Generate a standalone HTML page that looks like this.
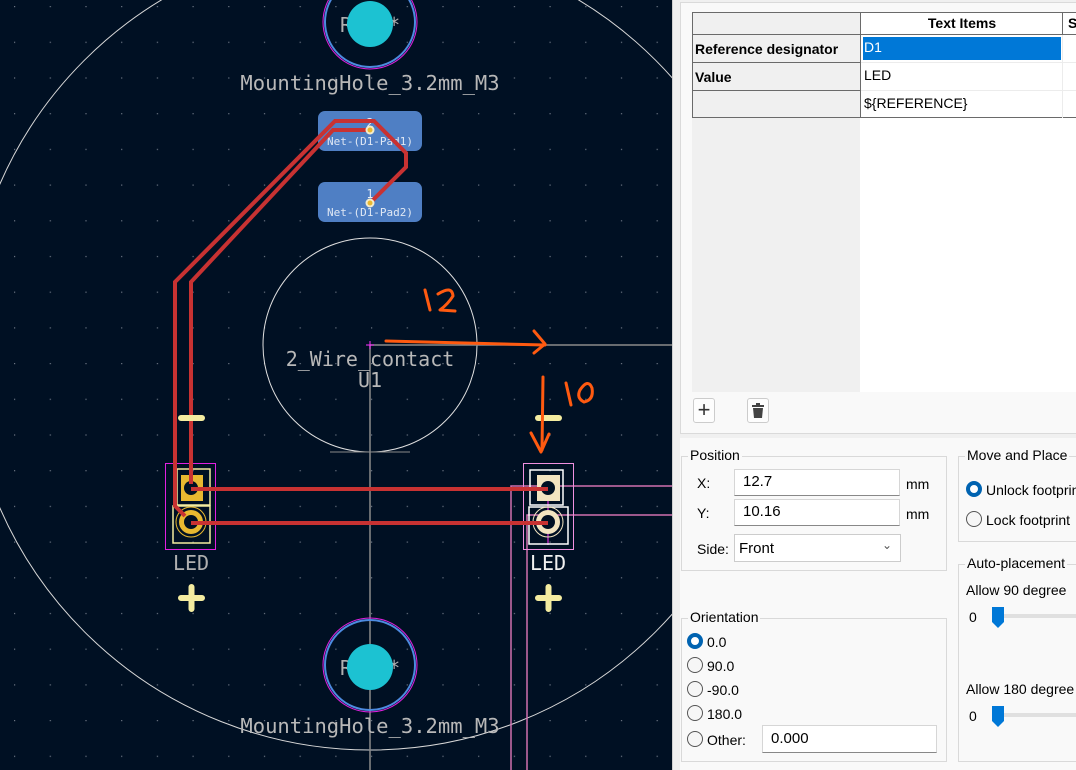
<!DOCTYPE html>
<html><head><meta charset="utf-8"><style>
*{margin:0;padding:0;box-sizing:border-box}
body{width:1076px;height:770px;overflow:hidden;position:relative;font-family:"Liberation Sans",sans-serif;font-size:14px;color:#000;background:#f0f0f0}
.a{position:absolute}
.gb{position:absolute;border:1px solid #d9d9d9}
.gl{position:absolute;background:#f9f9f9;padding:0 2px;top:-10px;left:6px;font-size:14px;white-space:nowrap}
.inp{position:absolute;background:#fff;border:1px solid #d6d6d6;border-bottom:1px solid #888;padding:3px 8px;font-size:15px}
.rad{position:absolute;width:16px;height:16px;border:1px solid #555;border-radius:50%;background:#f6f6f6}
.rad.on{border:4px solid #0063b1;background:#fff}
</style></head><body>
<svg class="a" style="left:0;top:0" width="672" height="770" viewBox="0 0 672 770">
<defs><pattern id="g" x="14" y="6" width="35.7" height="35.7" patternUnits="userSpaceOnUse"><rect x="0" y="0" width="1.2" height="1.2" fill="#6d7684"/></pattern></defs>
<rect width="672" height="770" fill="#001023"/>
<rect width="672" height="770" fill="url(#g)"/>
<circle cx="370" cy="346" r="404" fill="none" stroke="#d8d8d8" stroke-width="1"/>
<circle cx="370" cy="345" r="107" fill="none" stroke="#e0e0e0" stroke-width="1"/>
<line x1="370" y1="345" x2="370" y2="770" stroke="#8a8a8a" stroke-width="1.5"/>
<line x1="370" y1="345" x2="672" y2="345" stroke="#8a8a8a" stroke-width="1.5"/>
<line x1="330" y1="452" x2="410" y2="452" stroke="#8a8a8a" stroke-width="1"/>
<path d="M366 345h8M370 341v8" stroke="#ff30ff" stroke-width="1"/>
<g><circle cx="370" cy="22" r="47" fill="none" stroke="#e020e0" stroke-width="1"/><circle cx="370" cy="22" r="45" fill="none" stroke="#4d8be0" stroke-width="2"/>
<text x="340" y="32" fill="#b0b0b0" font-family="DejaVu Sans Mono" font-size="20">REF**</text><circle cx="370" cy="24" r="23" fill="#1cc2d2"/></g>
<g><circle cx="370" cy="665" r="47" fill="none" stroke="#e020e0" stroke-width="1"/><circle cx="370" cy="665" r="45" fill="none" stroke="#4d8be0" stroke-width="2"/>
<text x="340" y="675" fill="#b0b0b0" font-family="DejaVu Sans Mono" font-size="20">REF**</text><circle cx="370" cy="667" r="23" fill="#1cc2d2"/></g>
<text x="370" y="90" fill="#b8b8b8" font-family="DejaVu Sans Mono" font-size="20.5" text-anchor="middle">MountingHole_3.2mm_M3</text>
<text x="370" y="733" fill="#b8b8b8" font-family="DejaVu Sans Mono" font-size="20.5" text-anchor="middle">MountingHole_3.2mm_M3</text>
<rect x="318" y="111" width="104" height="40" rx="7" fill="#4f7fc4"/>
<rect x="318" y="182" width="104" height="40" rx="7" fill="#4f7fc4"/>
<text x="370" y="127" fill="#e8eef8" font-family="DejaVu Sans Mono" font-size="12" text-anchor="middle">2</text>
<text x="370" y="145" fill="#e0e8f4" font-family="DejaVu Sans Mono" font-size="11" text-anchor="middle">Net-(D1-Pad1)</text>
<text x="370" y="198" fill="#e8eef8" font-family="DejaVu Sans Mono" font-size="12" text-anchor="middle">1</text>
<text x="370" y="216" fill="#e0e8f4" font-family="DejaVu Sans Mono" font-size="11" text-anchor="middle">Net-(D1-Pad2)</text>
<text x="370" y="366" fill="#b8b8b8" font-family="DejaVu Sans Mono" font-size="20" text-anchor="middle">2_Wire_contact</text>
<text x="370" y="387" fill="#b8b8b8" font-family="DejaVu Sans Mono" font-size="20" text-anchor="middle">U1</text>
<g stroke="#d070b0" stroke-width="1.5" fill="none">
<path d="M511 770V486H672"/><path d="M527 770V515H672"/>
<path d="M548 500V545" stroke="#ff30ff" stroke-width="1"/>
</g>
<rect x="165.5" y="463.5" width="50" height="86" fill="none" stroke="#e020e0" stroke-width="1"/>
<rect x="523.5" y="463.5" width="50" height="86" fill="none" stroke="#f090e0" stroke-width="1"/>
<g fill="none" stroke="#f4eca0" stroke-width="1.5"><rect x="177" y="469" width="33" height="36"/><rect x="173" y="506" width="37" height="37"/></g>
<rect x="181" y="475" width="22" height="26" fill="#e8b830"/>
<circle cx="191" cy="522" r="15" fill="none" stroke="#e8b830" stroke-width="1"/>
<circle cx="191" cy="522" r="12" fill="#e8b830"/>
<circle cx="191" cy="488" r="7" fill="#001023"/><circle cx="191" cy="522" r="7" fill="#001023"/>
<g fill="none" stroke="#ffffff" stroke-width="1.5"><rect x="530" y="470" width="33" height="35"/><rect x="529" y="507" width="39" height="37"/></g>
<rect x="537" y="475" width="23" height="26" fill="#f2e4c0"/>
<circle cx="548" cy="522" r="15" fill="none" stroke="#f2e4c0" stroke-width="1"/>
<circle cx="548" cy="522" r="12" fill="#f2e4c0"/>
<circle cx="548" cy="488" r="7" fill="#001023"/><circle cx="548" cy="522" r="7" fill="#001023"/>
<g stroke="#c83232" stroke-width="4" fill="none" stroke-linejoin="miter">
<path d="M191 484V282L333 130H370"/>
<path d="M185 516L175 506V282L335 121H374L406 153V167L370 203"/>
<path d="M191 489H548"/><path d="M191 523H548"/>
</g>
<circle cx="370" cy="130" r="4.5" fill="#f4eccc"/><circle cx="370" cy="130" r="2.5" fill="#e8b830"/>
<circle cx="370" cy="203" r="4.5" fill="#f4eccc"/><circle cx="370" cy="203" r="2.5" fill="#e8b830"/>
<g stroke="#f4eca0" stroke-width="6" stroke-linecap="round">
<path d="M181 418H202"/><path d="M538 418H559"/>
<path d="M181 598H202M191.5 587V609"/><path d="M538 598H559M548.5 587V609"/>
</g>
<text x="191" y="570" fill="#b0b0b0" font-family="DejaVu Sans Mono" font-size="20" text-anchor="middle">LED</text>
<text x="548" y="570" fill="#f0f0f0" font-family="DejaVu Sans Mono" font-size="20" text-anchor="middle">LED</text>
<g stroke="#ff5a10" stroke-width="3" fill="none" stroke-linecap="round" stroke-linejoin="round">
<path d="M386 341Q470 343 545 345"/><path d="M534 331L545 344L534 353"/>
<path d="M425 290L430 310"/><path d="M438 294Q452 285 453 296Q448 304 440 310L455 311"/>
<path d="M543 377L542 450"/><path d="M531 433L541 452L549 434"/>
<path d="M566 383L571 405"/><path d="M580 390Q588 378 592 388Q594 400 584 402Q576 398 580 390"/>
</g>
</svg>
<div class="a" style="left:672px;top:0;width:404px;height:770px;background:#f0f0f0;border-left:1px solid #d0d0d0"></div>
<div class="a" style="left:680px;top:2px;width:400px;height:432px;border:1px solid #dadada;background:#f9f9f9"></div>
<div class="a" style="left:680px;top:438px;width:396px;height:332px;background:#f9f9f9"></div>
<div class="a" style="left:692px;top:12px;width:384px;height:380px;background:#fff"></div>
<div class="a" style="left:692px;top:12px;width:168px;height:380px;background:#f0f0f0"></div>
<div class="a" style="left:692px;top:12px;width:384px;height:106px;border:1px solid #6a6a6a;border-right:none"></div>
<div class="a" style="left:860px;top:12px;width:1px;height:106px;background:#6a6a6a"></div>
<div class="a" style="left:692px;top:34px;width:384px;height:1px;background:#6a6a6a"></div>
<div class="a" style="left:692px;top:62px;width:168px;height:1px;background:#6a6a6a"></div>
<div class="a" style="left:692px;top:90px;width:168px;height:1px;background:#6a6a6a"></div>
<div class="a" style="left:861px;top:62px;width:215px;height:1px;background:#ececec"></div>
<div class="a" style="left:861px;top:90px;width:215px;height:1px;background:#ececec"></div>
<div class="a" style="left:1062px;top:12px;width:1px;height:23px;background:#6a6a6a"></div>
<div class="a" style="left:1062px;top:35px;width:1px;height:83px;background:#ececec"></div>
<div class="a" style="left:862px;top:15px;width:200px;text-align:center;font-weight:bold">Text Items</div>
<div class="a" style="left:1068px;top:15px;font-weight:bold">S</div>
<div class="a" style="left:863px;top:37px;width:198px;height:23px;background:#0078d7"></div>
<div class="a" style="left:864px;top:39px;color:#fff">D1</div>
<div class="a" style="left:695px;top:41px;font-weight:bold">Reference designator</div>
<div class="a" style="left:695px;top:69px;font-weight:bold">Value</div>
<div class="a" style="left:864px;top:67px">LED</div>
<div class="a" style="left:864px;top:95px">${REFERENCE}</div>
<div class="a" style="left:693px;top:398px;width:22px;height:25px;border:1px solid #ccc;border-radius:3px;background:#fdfdfd;font-size:22px;line-height:22px;text-align:center;color:#333">+</div>
<div class="a" style="left:747px;top:398px;width:22px;height:25px;border:1px solid #ccc;border-radius:3px;background:#fdfdfd"></div>
<svg class="a" style="left:752px;top:403px" width="12" height="15"><rect x="0" y="2" width="12" height="2" fill="#444"/><rect x="4" y="0" width="4" height="2" fill="#444"/><path d="M1 5H11L10 15H2Z" fill="#444"/></svg>
<div class="gb" style="left:681px;top:456px;width:266px;height:115px"><div class="gl">Position</div></div>
<div class="a" style="left:697px;top:475px">X:</div>
<div class="a" style="left:697px;top:505px">Y:</div>
<div class="inp" style="left:734px;top:469px;width:166px;height:27px">12.7</div>
<div class="inp" style="left:734px;top:499px;width:166px;height:27px">10.16</div>
<div class="a" style="left:906px;top:476px">mm</div>
<div class="a" style="left:906px;top:506px">mm</div>
<div class="a" style="left:697px;top:541px">Side:</div>
<div class="a" style="left:734px;top:534px;width:167px;height:28px;border:1px solid #ccc;background:#fff;padding:5px 4px;font-size:15px">Front<span style="position:absolute;right:8px;top:3px;font-size:12px;color:#555">&#8964;</span></div>
<div class="gb" style="left:681px;top:618px;width:266px;height:144px"><div class="gl">Orientation</div></div>
<div class="rad on" style="left:687px;top:633px"></div><div class="a" style="left:707px;top:634px">0.0</div>
<div class="rad" style="left:687px;top:657px"></div><div class="a" style="left:707px;top:658px">90.0</div>
<div class="rad" style="left:687px;top:681px"></div><div class="a" style="left:707px;top:682px">-90.0</div>
<div class="rad" style="left:687px;top:705px"></div><div class="a" style="left:707px;top:706px">180.0</div>
<div class="rad" style="left:687px;top:731px"></div><div class="a" style="left:707px;top:732px">Other:</div>
<div class="inp" style="left:762px;top:725px;width:175px;height:28px;padding-top:4px">0.000</div>
<div class="gb" style="left:958px;top:456px;width:130px;height:86px"><div class="gl">Move and Place</div></div>
<div class="rad on" style="left:966px;top:481px"></div><div class="a" style="left:986px;top:482px;white-space:nowrap">Unlock footprint</div>
<div class="rad" style="left:966px;top:511px"></div><div class="a" style="left:986px;top:512px;white-space:nowrap">Lock footprint</div>
<div class="gb" style="left:958px;top:564px;width:130px;height:198px"><div class="gl">Auto-placement</div></div>
<div class="a" style="left:966px;top:582px;white-space:nowrap">Allow 90 degree</div>
<div class="a" style="left:969px;top:609px">0</div>
<div class="a" style="left:992px;top:614px;width:90px;height:4px;background:#e0e0e0"></div>
<svg class="a" style="left:991px;top:606px" width="14" height="22"><path d="M1 1H13V16L7 22L1 16Z" fill="#0078d7"/></svg>
<div class="a" style="left:966px;top:681px;white-space:nowrap">Allow 180 degree</div>
<div class="a" style="left:969px;top:708px">0</div>
<div class="a" style="left:992px;top:713px;width:90px;height:4px;background:#e0e0e0"></div>
<svg class="a" style="left:991px;top:705px" width="14" height="22"><path d="M1 1H13V16L7 22L1 16Z" fill="#0078d7"/></svg>
</body></html>
